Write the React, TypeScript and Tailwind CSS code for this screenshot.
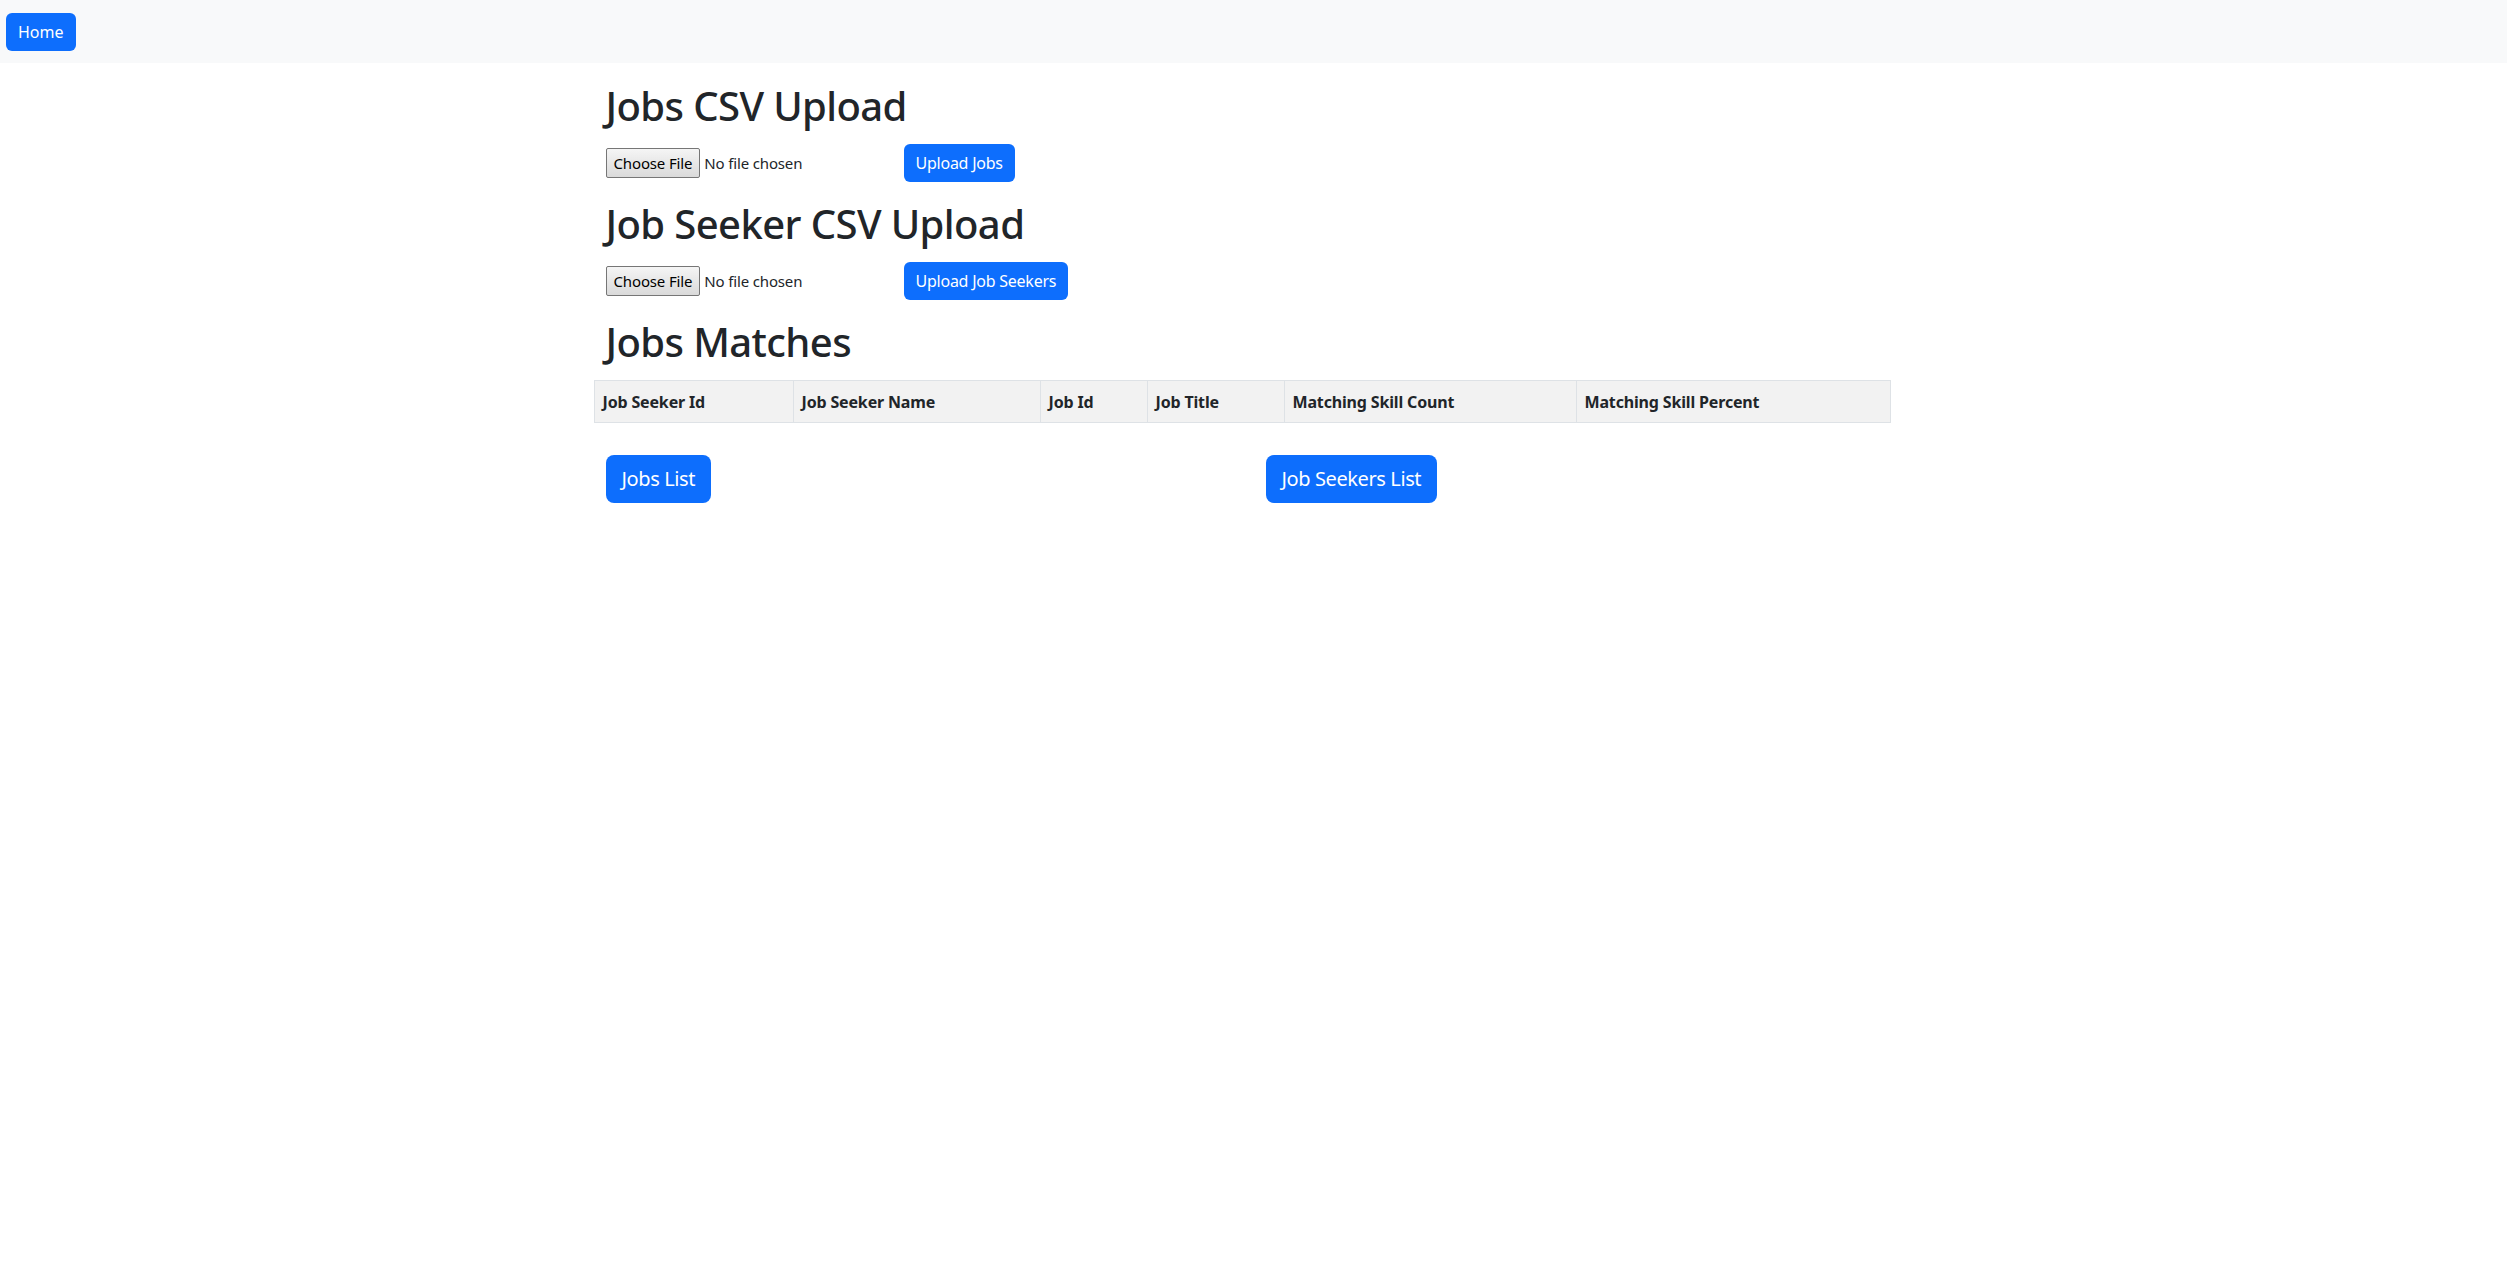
const COLS = [
  { label: 'Job Seeker Id', w: 'w-[199px]' },
  { label: 'Job Seeker Name', w: 'w-[247px]' },
  { label: 'Job Id', w: 'w-[107px]' },
  { label: 'Job Title', w: 'w-[137px]' },
  { label: 'Matching Skill Count', w: 'w-[292px]' },
  { label: 'Matching Skill Percent', w: 'w-[314px]' },
]

function FilePicker() {
  return (
    <label className="w-[298px] flex items-center cursor-pointer">
      <span className="h-[30px] px-[7px] flex items-center border border-[#767676] rounded-[2px] bg-gradient-to-b from-[#f5f5f5] to-[#dadada] text-[15px] tracking-[-0.01em] text-black">
        Choose File
      </span>
      <span className="ml-1 text-[15px] tracking-[-0.01em]">No file chosen</span>
      <input type="file" className="hidden" />
    </label>
  )
}

function Heading({ children }: { children: string }) {
  return <h1 className="pt-[3px] text-[40px] leading-[45px] font-medium tracking-[-0.015em]">{children}</h1>
}

function UploadSection({ title, action }: { title: string; action: string }) {
  return (
    <section className="mb-4">
      <Heading>{title}</Heading>
      <div className="mt-4 h-[38px] flex items-center">
        <FilePicker />
        <button className="h-[38px] px-3 rounded-md bg-[#0d6efd] text-white text-base leading-6 tracking-[-0.015em]">
          {action}
        </button>
      </div>
    </section>
  )
}

export default function App() {
  return (
    <div className="min-h-screen bg-white text-[#212529] font-['Noto_Sans',sans-serif]">
      <nav className="h-[63px] bg-[#f8f9fa] pl-[6px] pt-[13px]">
        <button className="h-[38px] px-3 rounded-md bg-[#0d6efd] text-white text-base leading-6">Home</button>
      </nav>

      <main className="w-[1320px] mx-auto px-3 pt-[17px]">
        <UploadSection title="Jobs CSV Upload" action="Upload Jobs" />
        <UploadSection title="Job Seeker CSV Upload" action="Upload Job Seekers" />

        <Heading>Jobs Matches</Heading>
        <table className="mt-4 -ml-3 w-[1296px] table-fixed border-collapse">
          <thead>
            <tr>
              {COLS.map(c => (
                <th key={c.label} className={`${c.w} h-[42px] px-2 text-left text-base leading-6 font-bold tracking-[-0.01em] bg-[#f2f2f2] border border-[#dee2e6]`}>
                  {c.label}
                </th>
              ))}
            </tr>
          </thead>
          <tbody />
        </table>

        <div className="mt-8 -mx-3 grid grid-cols-2">
          <div className="px-3">
            <button className="h-12 px-4 rounded-lg bg-[#0d6efd] text-white text-xl leading-[30px] tracking-[-0.02em]">Jobs List</button>
          </div>
          <div className="px-3">
            <button className="h-12 px-4 rounded-lg bg-[#0d6efd] text-white text-xl leading-[30px] tracking-[-0.02em]">Job Seekers List</button>
          </div>
        </div>
      </main>
    </div>
  )
}
